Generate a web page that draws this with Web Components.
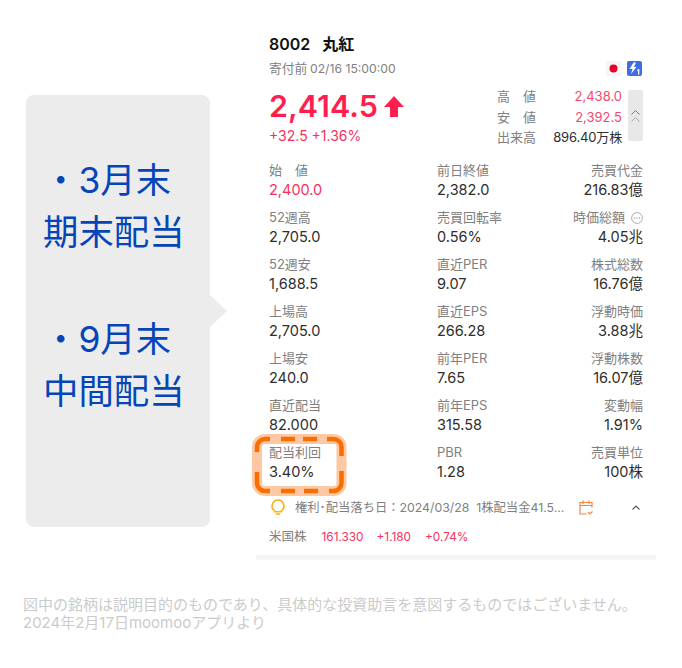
<!DOCTYPE html>
<html lang="ja"><head><meta charset="utf-8">
<style>
html,body{margin:0;padding:0;background:#fff}
body{width:682px;height:668px;overflow:hidden;font-family:"Inter","Noto Sans CJK JP",sans-serif}
</style></head><body>
<x-page>
  <x-callout slot="left">
    <p>・3月末<br>期末配当</p>
    <p>・9月末<br>中間配当</p>
  </x-callout>
  <x-quote slot="right"></x-quote>
  <x-note slot="foot">図中の銘柄は説明目的のものであり、具体的な投資助言を意図するものではございません。<br>2024年2月17日moomooアプリより</x-note>
</x-page>
<script>
const F='"Inter","Noto Sans CJK JP",sans-serif';
class XPage extends HTMLElement{constructor(){super();this.attachShadow({mode:'open'}).innerHTML=`<style>
:host{display:block;width:682px;height:668px}
.top{display:flex;align-items:flex-start;padding:29px 26px 0 26px}
.l{flex:none;width:184px;margin-top:66px}
.r{flex:none;width:400px;margin-left:46px}
.f{padding:36px 0 0 23px}
</style><div class="top"><div class="l"><slot name="left"></slot></div><div class="r"><slot name="right"></slot></div></div><div class="f"><slot name="foot"></slot></div>`}}
customElements.define('x-page',XPage);

class XCallout extends HTMLElement{constructor(){super();this.attachShadow({mode:'open'}).innerHTML=`<style>
:host{display:flex;flex-direction:column;position:relative;box-sizing:border-box;width:184px;height:432px;background:#ececec;border-radius:8px;padding:60px 0 0 17px;gap:55px;color:#0645b8;font:35.400px/52px ${F};text-align:left}
::slotted(p){margin:0;white-space:nowrap}
.tail{position:absolute;left:184px;top:200px;width:0;height:0;border-left:17px solid #ececec;border-top:16px solid transparent;border-bottom:16px solid transparent}
</style><slot></slot><div class="tail"></div>`}}
customElements.define('x-callout',XCallout);

class XNote extends HTMLElement{constructor(){super();this.attachShadow({mode:'open'}).innerHTML=`<style>
:host{display:block;color:#cbcbcb;font:15px/18px ${F};white-space:nowrap}
</style><slot></slot>`}}
customElements.define('x-note',XNote);

class XStat extends HTMLElement{
constructor(){super();this.attachShadow({mode:'open'}).innerHTML=`<style>
:host{display:block;font-family:${F};position:relative}
:host([end]){text-align:right}
.k{font-size:13px;line-height:19px;height:19px;color:#808080;white-space:pre;display:flex;align-items:center;gap:6px}
:host([end]) .k{justify-content:flex-end}
.v{font-size:14.5px;line-height:19px;height:19px;color:#2e2e2e;white-space:pre}
:host([up]) .v{color:#f5325c}
</style><div class="k"><span><slot name="k"></slot></span><slot name="i"></slot></div><div class="v"><slot></slot></div>`}}
customElements.define('x-stat',XStat);

class XHighlight extends HTMLElement{constructor(){super();this.attachShadow({mode:'open'}).innerHTML=`<style>
:host{display:block;position:absolute;left:-17px;top:-9px;width:95px;height:63px;pointer-events:none}
svg{display:block}
</style><svg width="95" height="63" viewBox="0 0 95 63" fill="none">
<rect x="5" y="5" width="84.500" height="52" rx="8" stroke="#fec8a4" stroke-width="10"/>
<path d="M5 18V13a8 8 0 0 1 8-8h5M29 5h14M51 5h14M75 5h6.500a8 8 0 0 1 8 8v9M89.500 37v12a8 8 0 0 1-8 8H77M66 57H52M43 57H29M18 57h-5a8 8 0 0 1-8-8V38" stroke="#f96e00" stroke-width="4.500"/></svg>`}}
customElements.define('x-highlight',XHighlight);

const rows=[
[['始　値','2,400.0',1],['前日終値','2,382.0'],['売買代金','216.83億']],
[['52週高','2,705.0'],['売買回転率','0.56%'],['時価総額','4.05兆',0,1]],
[['52週安','1,688.5'],['直近PER','9.07'],['株式総数','16.76億']],
[['上場高','2,705.0'],['直近EPS','266.28'],['浮動時価','3.88兆']],
[['上場安','240.0'],['前年PER','7.65'],['浮動株数','16.07億']],
[['直近配当','82.000'],['前年EPS','315.58'],['変動幅','1.91%']],
[['配当利回','3.40%',0,0,1],['PBR','1.28'],['売買単位','100株']]];
const more=`<svg slot="i" width="12" height="12" viewBox="0 0 12 12" fill="none" style="display:block"><circle cx="6" cy="6" r="5.400" stroke="#999" stroke-width=".8"/><circle cx="3.500" cy="6" r=".7" fill="#999"/><circle cx="6" cy="6" r=".7" fill="#999"/><circle cx="8.500" cy="6" r=".7" fill="#999"/></svg>`;
const stat=(s,c)=>`<div class="cell">${s[4]?'<x-highlight></x-highlight>':''}<x-stat ${c==2?'end':''} ${s[2]?'up':''}><span slot="k">${s[0]}</span>${s[3]?more:''}${s[1]}</x-stat></div>`;

class XQuote extends HTMLElement{constructor(){super();this.attachShadow({mode:'open'}).innerHTML=`<style>
:host{display:block;box-sizing:border-box;width:400px;font-family:${F};color:#222}
.pad{padding:0 13px}
.title{font-size:16px;line-height:30px;font-weight:600;color:#111;word-spacing:8px}
.sub{display:flex;align-items:center;justify-content:space-between;font-size:12.800px;line-height:20px;height:20px;color:#808080;margin-top:0}
.sub i{font-style:normal;font-size:12.200px;margin-left:-1px}
.flags{display:flex;gap:6px;align-items:center;margin:-2px 1px 0 0}
.flags svg{display:block}
.q{display:flex;justify-content:space-between;margin-top:8px;height:64px}
.px{display:flex;align-items:center;font-size:30.500px;line-height:38px;height:38px;font-weight:600;color:#ff1f4f}
.px svg{margin-left:6px;display:block}
.chg{font-size:14px;line-height:18px;color:#f5325c;margin-top:2px;word-spacing:0}
.hl{display:flex;gap:6px}
.hlt{display:grid;grid-template-columns:40px 85px;grid-auto-rows:20.500px;font-size:13px;line-height:20.500px;color:#808080;margin-top:-1px}
.hlt span:nth-child(even){text-align:right;color:#f4486d}
.hlt span.n{color:#2e2e2e;letter-spacing:-.15px}
.tog{width:15px;height:51px;background:#e8e8e8;border-radius:2px;margin-top:3px;display:flex;align-items:center;justify-content:center}
.grid{display:grid;grid-template-columns:168px 1fr auto;grid-auto-rows:38px;row-gap:9px;margin-top:10px}
.cell{position:relative}
.tip{display:flex;align-items:center;height:20px;margin-top:16px;font-size:12.300px;color:#808080;white-space:pre}
.tip .t{width:284px;flex:none;margin-left:10px}
.tip svg{display:block;flex:none}
.tip .bulb{margin-left:2px}
.us{display:flex;font-size:12.500px;line-height:18px;height:18px;margin-top:11px;color:#808080}
.us b{font-weight:400;color:#f5325c;font-size:11.800px}
.bar{height:5px;background:#f5f5f5;margin-top:9px}
</style>
<div class="pad">
<div class="title">8002 丸紅</div>
<div class="sub"><span>寄付前 <i>02/16 15:00:00</i></span><span class="flags">
<svg width="15" height="15" viewBox="0 0 15 15"><rect width="15" height="15" rx="1" fill="#f5f5f5"/><circle cx="7.500" cy="7.500" r="4" fill="#e4002b"/></svg>
<svg width="15" height="15" viewBox="0 0 15 15"><rect width="15" height="15" rx="2" fill="#3e6ee6"/><path d="M6.500 1.500 2.500 8h3L4 13 9.500 6H7L9 1.500z" fill="#fff"/><path d="M11.500 8 10 9.200v1l1-.7V13.500h1.300V8z" fill="#fff"/></svg>
</span></div>
<div class="q"><div><div class="px">2,414.5<svg width="20" height="21" viewBox="0 0 20 21"><path d="M10 0 20 11h-6v10H6V11H0z" fill="#ff1f4f"/></svg></div><div class="chg">+32.5 +1.36%</div></div>
<div class="hl"><div class="hlt"><span>高　値</span><span>2,438.0</span><span>安　値</span><span>2,392.5</span><span>出来高</span><span class="n">896.40万株</span></div>
<div class="tog"><svg width="11" height="16" viewBox="0 0 11 16" fill="none"><path d="M1.500 6.500 5.500 2.500l4 4" stroke="#777" stroke-width="1"/><path d="M1.500 13.500l4-4 4 4" stroke="#aaa" stroke-width="1"/></svg></div></div></div>
<div class="grid">${rows.map(r=>r.map(stat).join('')).join('')}</div>
<div class="tip"><svg class="bulb" width="14" height="16" viewBox="0 0 14 16" fill="none"><path d="M7 1a6 6 0 0 0-3.200 11v.8h6.400V12A6 6 0 0 0 7 1z" stroke="#fbb11f" stroke-width="1.600"/><path d="M4.800 15h4.400" stroke="#fbb11f" stroke-width="1.500"/></svg><span class="t">権利･配当落ち日：2024/03/28  1株配当金41.5...</span>
<svg width="14" height="15" viewBox="0 0 14 15" fill="none" stroke="#f5843c" stroke-width="1.200"><path d="M13 7.500V2.500H1v11.500h6.500"/><path d="M1 5.500h12M4 .5v3.500M10 .5v3.500M9 12l2 2 2.500-2.500"/></svg>
<svg style="margin-left:39px" width="8" height="5" viewBox="0 0 8 5" fill="none"><path d="M.5 4.500 4 1l3.500 3.500" stroke="#555" stroke-width="1.100"/></svg></div>
<div class="us"><span>米国株</span><b style="margin-left:15px">161.330</b><b style="margin-left:13px">+1.180</b><b style="margin-left:14px">+0.74%</b></div>
</div>
<div class="bar"></div>`}}
customElements.define('x-quote',XQuote);
</script>
</body></html>
